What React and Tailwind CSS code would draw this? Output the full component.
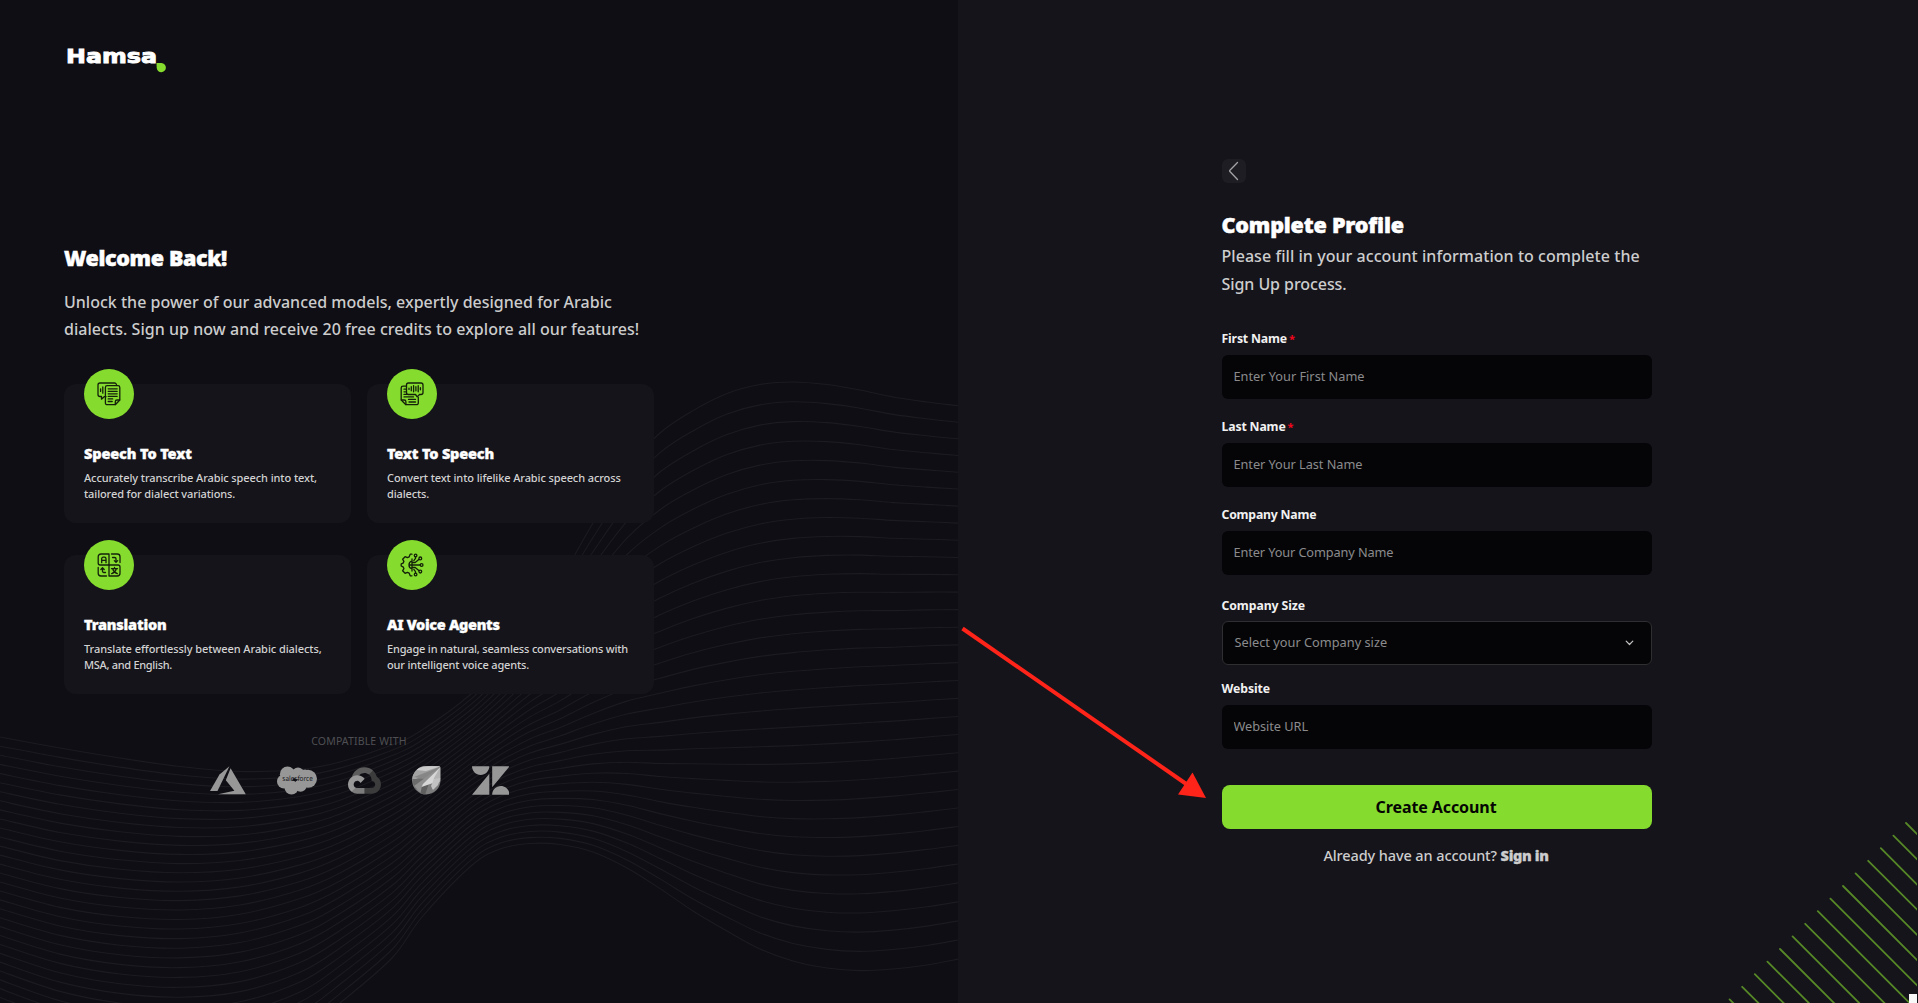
import React from "react";

/* ---------- background artwork ---------- */

const WAVE_X = [0, 60, 120, 180, 240, 300, 340, 392, 422, 471, 500, 530, 560, 593, 627, 660, 693, 727, 760, 793, 827, 860, 893, 927, 960];
const WAVE_TOP = [737, 748, 758, 766.5, 771.5, 769.5, 762, 745, 730, 694, 663, 622, 580, 523, 469, 433, 410.6, 393.5, 384.5, 382, 384.5, 390, 397, 402, 406];
const WAVE_MID = [882, 898, 907, 910, 905, 890, 873, 842, 819, 780, 761, 746, 736, 724, 714, 708, 702, 697, 693, 690, 687.5, 685.5, 684, 682, 680.4];
const WAVE_LOW = [1015, 1038, 1052, 1058, 1054, 1033, 1003, 958, 917, 866, 849, 843.5, 844.5, 852, 868, 888.6, 911, 931, 949, 961, 968, 970.6, 969, 965, 958.8];
const WAVE_COUNT = 32;

function wavePath(k) {
  const a = ((k - 16) * (k - 31)) / (16 * 31);
  const b = (k * (k - 31)) / (16 * -15);
  const c = (k * (k - 16)) / (31 * 15);
  const pts = WAVE_X.map((x, i) => [x, a * WAVE_TOP[i] + b * WAVE_MID[i] + c * WAVE_LOW[i]]);
  let d = `M${pts[0][0]} ${pts[0][1].toFixed(1)}`;
  for (let i = 0; i < pts.length - 1; i++) {
    const p0 = pts[i - 1] || pts[i];
    const p1 = pts[i];
    const p2 = pts[i + 1];
    const p3 = pts[i + 2] || p2;
    const c1 = [p1[0] + (p2[0] - p0[0]) / 6, p1[1] + (p2[1] - p0[1]) / 6];
    const c2 = [p2[0] - (p3[0] - p1[0]) / 6, p2[1] - (p3[1] - p1[1]) / 6];
    d += `C${c1[0].toFixed(1)} ${c1[1].toFixed(1)} ${c2[0].toFixed(1)} ${c2[1].toFixed(1)} ${p2[0]} ${p2[1].toFixed(1)}`;
  }
  return d;
}

function Waves() {
  return (
    <svg className="absolute inset-0" width="958" height="1003" viewBox="0 0 958 1003" fill="none" stroke="#1c1b21" strokeWidth="1.1" aria-hidden="true">
      {Array.from({ length: WAVE_COUNT }, (_, k) => (
        <path key={k} d={wavePath(k)} />
      ))}
    </svg>
  );
}

function CornerHatch() {
  return (
    <svg className="absolute right-px bottom-0" width="199" height="200" viewBox="0 0 199 200" fill="none" stroke="#568827" strokeWidth="1.8" strokeLinecap="round" aria-hidden="true">
      {Array.from({ length: 15 }, (_, i) => {
        const x = 188 - i * 12.6;
        const y = 20 + i * 12.6;
        return <path key={i} d={`M${x} ${y}l200 200`} />;
      })}
    </svg>
  );
}

function Arrow() {
  return (
    <svg className="absolute left-[950px] top-[610px]" width="280" height="200" viewBox="950 610 280 200" aria-hidden="true">
      <path d="M962.5 628.5L1187 784.5" stroke="#fe2419" strokeWidth="4" />
      <path d="M1206 798L1192.500 772.500L1178 794.500Z" fill="#fe2419" />
    </svg>
  );
}

/* ---------- brand marks ---------- */

function Logo() {
  return (
    <svg width="102" height="28" viewBox="0 0 102 28" role="img" aria-label="Hamsa">
      <text x="0" y="17.4" textLength="91" lengthAdjust="spacingAndGlyphs" fontSize="19.5" fontWeight="700" fill="#fff" stroke="#fff" strokeWidth="0.9" fontFamily="'DejaVu Sans', sans-serif">
        Hamsa
      </text>
      <path d="M90.5 17h5a4.6 4.6 0 1 1-4.8 4.8z" fill="#85dc2e" />
    </svg>
  );
}

function Azure() {
  return (
    <svg width="36" height="29" viewBox="0 0 36 29" fill="#979797" aria-hidden="true">
      <path d="M19.4.2L9.5 8.6L0 25h7.5z" />
      <path d="M20.6 2.2L15.8 14.3l8.6 10.4L8 28.3h27.8z" />
    </svg>
  );
}

function Salesforce() {
  return (
    <svg width="40" height="29" viewBox="0 0 40 29" aria-hidden="true">
      <g fill="#979797">
        <circle cx="10.5" cy="8.2" r="7.6" />
        <circle cx="21" cy="7.4" r="6" />
        <circle cx="31" cy="12.8" r="9" />
        <circle cx="7" cy="15.5" r="7" />
        <circle cx="14.5" cy="21.5" r="7" />
        <circle cx="23.5" cy="19.5" r="6.2" />
        <circle cx="28" cy="9" r="5.5" />
      </g>
      <text x="5.3" y="15.4" textLength="30.5" lengthAdjust="spacingAndGlyphs" fontSize="7.2" fill="#18171c" textRendering="geometricPrecision" fontFamily="'Noto Sans', sans-serif">
        salesforce
      </text>
    </svg>
  );
}

function GoogleCloud() {
  return (
    <svg width="33" height="27" viewBox="0 0 256 206" aria-hidden="true">
      <path fill="#5c5c5c" d="M170.25 56.82l22.25-22.25 1.48-9.37C153.44-11.68 88.98-7.5 52.42 33.92 42.27 45.42 34.73 59.76 30.72 74.57l7.97-1.12 44.5-7.34 3.44-3.51c19.8-21.74 53.27-24.67 76.13-6.17l7.49.39z" />
      <path fill="#3c3c3d" d="M224.2 73.92a100.25 100.25 0 0 0-30.21-48.72l-31.24 31.23a55.52 55.52 0 0 1 20.38 44.04v5.54c15.35 0 27.8 12.45 27.8 27.8s-12.45 27.57-27.8 27.57h-55.67l-5.47 5.94v33.34l5.47 5.23h55.67c39.93.31 72.55-31.5 72.86-71.42a72.3 72.3 0 0 0-31.79-60.55z" />
      <path fill="#7b7b7b" d="M71.87 205.8h55.59v-44.5H71.87a27.28 27.28 0 0 1-11.4-2.5l-7.89 2.42-22.41 22.25-1.95 7.58a71.48 71.48 0 0 0 43.65 14.75z" />
      <path fill="#989898" d="M71.87 61.43C31.94 61.66-.24 94.23 0 134.16a72.3 72.3 0 0 0 28.22 56.88l32.25-32.25c-13.99-6.32-20.21-22.78-13.89-36.77s22.79-20.21 36.78-13.89a27.8 27.8 0 0 1 13.88 13.89l32.25-32.25a72.22 72.22 0 0 0-57.62-28.34z" />
    </svg>
  );
}

function Leaf() {
  return (
    <svg width="29" height="29" viewBox="0 0 29 29" aria-hidden="true">
      <clipPath id="leaf-clip">
        <path d="M14.3 0H26.5a2 2 0 0 1 2 2v12.3A14.2 14.2 0 1 1 14.3 0z" />
      </clipPath>
      <g clipPath="url(#leaf-clip)">
        <path d="M0 0h29v29H0z" fill="#7c7c7c" />
        <path d="M0 0h29L16 7L0 15z" fill="#a2a2a2" />
        <path d="M4 4C9 0 16 0 28 .5L14 5z" fill="#cacaca" />
        <path d="M2 11L28 1L13 13z" fill="#868686" />
        <path d="M0 13L13 13L10 20L3 24z" fill="#6c6c6c" />
        <path d="M2 20L28 1L9 27z" fill="#8f8f8f" />
        <path d="M10 20L17 17L13 29H8z" fill="#5f5f5f" />
        <path d="M28.5 1L11 18L9.5 21L24 16z" fill="#d6d6d6" />
        <path d="M28.5 .5V15L20 23L22 12z" fill="#b4b4b4" />
        <path d="M22 13L19 20L21 24L26 19L28.5 12z" fill="#c2c2c2" />
      </g>
    </svg>
  );
}

function Zendesk() {
  return (
    <svg width="37.5" height="29" viewBox="0 2.8 24 18.4" fill="#979797" aria-hidden="true">
      <path d="M12.914 2.904V16.29L24 2.905H12.914zM0 2.906C0 5.966 2.483 8.45 5.543 8.45s5.542-2.484 5.543-5.544H0zm11.086 4.807L0 21.096h11.086V7.713zm7.37 7.84c-3.063 0-5.542 2.48-5.542 5.543H24c0-3.06-2.48-5.543-5.543-5.543z" />
    </svg>
  );
}

/* ---------- feature icons ---------- */

function IconBase({ children }) {
  return (
    <svg width="24" height="24" viewBox="0 0 24 24" fill="none" stroke="#14200a" strokeWidth="1.3" strokeLinecap="round" strokeLinejoin="round" aria-hidden="true">
      {children}
    </svg>
  );
}

function SpeechToTextIcon() {
  return (
    <IconBase>
      <path d="M19.5 3.200V3a2 2 0 0 0-2-2H3a2 2 0 0 0-2 2v9.500a2 2 0 0 0 2 2h1.500v2.700l2.700-2.500H9" />
      <path d="M3.600 6.800v2.600M5.800 5v6.200" />
      <path d="M10.200 3.600h10.800a1.800 1.800 0 0 1 1.800 1.800V18l-4.500 4.700h-8.100A1.800 1.800 0 0 1 8.400 20.900V5.400a1.800 1.800 0 0 1 1.800-1.800z" />
      <path d="M18.300 22.500V19.700A1.700 1.700 0 0 1 20 18h2.600" />
      <path d="M11.200 6.800h9M11.200 9.300h9M11.200 11.800h9M11.200 14.300h9M11.200 16.900h4.500M11.200 19.500h4" />
    </IconBase>
  );
}

function TextToSpeechIcon() {
  return (
    <IconBase>
      <path d="M8.500 1h12.500a2 2 0 0 1 2 2v7.500a2 2 0 0 1-2 2h-1.500l-2.300 2.400l-1.700-2.400H8.500a2 2 0 0 1-2-2V3a2 2 0 0 1 2-2z" />
      <path d="M9 6.100v1.300M11.300 4.700v4.100M13.600 3.700v6.100M15.900 4.700v4.100M18.200 3.700v6.100M20.400 5.700v2.100" />
      <path d="M6.300 4.200H3A1.800 1.800 0 0 0 1.200 6v12l4.700 4.700h10.600a1.800 1.800 0 0 0 1.800-1.800v-5.500" />
      <path d="M1.400 18h2.800a1.700 1.700 0 0 1 1.700 1.700v2.800" />
      <path d="M4 7.200h1.500M4 9.800h1.500M4 12.400h2.500M4 14.900h9.500M8.500 17.400h7M9 20h6.500" />
    </IconBase>
  );
}

function TranslationIcon() {
  return (
    <IconBase>
      <path d="M12 1H4a2.800 2.800 0 0 0-2.800 2.800V10A2 2 0 0 0 3.200 12H12z" />
      <path d="M12 12v11h8.200a2.800 2.800 0 0 0 2.800-2.800V14a2 2 0 0 0-2-2z" />
      <path d="M14.500 1h5.700A2.800 2.800 0 0 1 23 3.800V9.500M1.200 14.500v5.700A2.800 2.800 0 0 0 4 23h5.500" />
      <path d="M4.700 9.700V5.700a1.500 1.500 0 0 1 1.500-1.500h1.300A1.500 1.500 0 0 1 9 5.700v4M4.700 7.400H9" />
      <path d="M15.500 4.500h2.200a1.300 1.300 0 0 1 1.300 1.300v3.200M17.300 7.600L19 9.400l1.700-1.800" />
      <path d="M8.500 19.500H6.800a1.300 1.300 0 0 1-1.300-1.300V15M3.900 16.500l1.600-1.700l1.700 1.700" />
      <path d="M14.500 15.700h6M17.500 14.400v1.300M19.300 15.900c-.6 2.500-2.300 4-4.600 4.800M15.700 15.900c.6 2.500 2.300 4 4.600 4.800" />
    </IconBase>
  );
}

function VoiceAgentIcon() {
  return (
    <IconBase>
      <path d="M12 1.200h-1.800l-1 2.600l-1.800.9l-2.300-1L2.600 6.200l1.300 2.200l-.8 1.700l-1.900.9M1.200 13l1.900.9l.8 1.700l-1.300 2.200l2.500 2.500l2.300-1l1.800.9l1 2.600H12M1.200 11v2" />
      <path d="M12 8.200a3.900 3.900 0 0 0 0 7.600M12 6v12M9.500 12h10.700M12 9.500h3.200l3.600-3M12 14.500h3.200l3.600 3M13.800 7.600l1.700-2.200V3.800M13.800 16.400l1.700 2.200v1.600" />
      <circle cx="15.600" cy="2.500" r="1.300" />
      <circle cx="20.300" cy="5.400" r="1.400" />
      <circle cx="21.600" cy="12" r="1.400" />
      <circle cx="20.300" cy="18.600" r="1.400" />
      <circle cx="15.600" cy="21.500" r="1.300" />
    </IconBase>
  );
}

/* ---------- left panel ---------- */

function FeatureCard({ icon, title, titleClass, lines }) {
  return (
    <article className="relative h-[139px] rounded-xl bg-[#15141a] px-5 pt-[59px]">
      <div className="absolute -top-[15px] left-5 flex size-[50px] items-center justify-center rounded-full bg-[#85dc2e]">
        {icon}
      </div>
      <h3 className={`text-[14.5px] leading-5 font-black whitespace-nowrap text-white [-webkit-text-stroke:0.35px_white] ${titleClass}`}>{title}</h3>
      <p className="mt-[7px] text-[11px] leading-4 font-medium whitespace-nowrap text-[#d2d2d3]">
        {lines.map(([text, tracking]) => (
          <span key={text} className={`block ${tracking}`}>
            {text}
          </span>
        ))}
      </p>
    </article>
  );
}

function LeftPanel() {
  return (
    <section className="relative h-full w-[958px] shrink-0 overflow-hidden bg-[#0f0e14]">
      <Waves />
      <div className="relative flex h-full w-[654px] flex-col pl-16">
        <header className="h-[242px] pt-[46px] pl-[1.5px]">
          <Logo />
        </header>
        <h1 className="text-[21.5px] leading-8 font-black tracking-[-0.36px] text-white [-webkit-text-stroke:0.5px_white]">Welcome Back!</h1>
        <p className="mt-[15px] text-base leading-[27px] font-medium whitespace-nowrap text-[#cccccd]">
          <span className="block tracking-[0.01px]">Unlock the power of our advanced models, expertly designed for Arabic</span>
          <span className="block tracking-[0.04px]">dialects. Sign up now and receive 20 free credits to explore all our features!</span>
        </p>
        <div className="mt-[41px] grid grid-cols-2 gap-x-4 gap-y-8">
          <FeatureCard
            icon={<SpeechToTextIcon />}
            title="Speech To Text"
            titleClass="tracking-[-0.13px]"
            lines={[
              ["Accurately transcribe Arabic speech into text,", "tracking-[-0.09px]"],
              ["tailored for dialect variations.", "tracking-[-0.11px]"],
            ]}
          />
          <FeatureCard
            icon={<TextToSpeechIcon />}
            title="Text To Speech"
            titleClass="tracking-[-0.18px]"
            lines={[
              ["Convert text into lifelike Arabic speech across", "tracking-[-0.1px]"],
              ["dialects.", "tracking-[-0.13px]"],
            ]}
          />
          <FeatureCard
            icon={<TranslationIcon />}
            title="Translation"
            titleClass="tracking-[-0.2px]"
            lines={[
              ["Translate effortlessly between Arabic dialects,", "tracking-[-0.06px]"],
              ["MSA, and English.", "tracking-[-0.3px]"],
            ]}
          />
          <FeatureCard
            icon={<VoiceAgentIcon />}
            title="AI Voice Agents"
            titleClass="tracking-[-0.34px]"
            lines={[
              ["Engage in natural, seamless conversations with", "tracking-[-0.18px]"],
              ["our intelligent voice agents.", "tracking-[-0.15px]"],
            ]}
          />
        </div>
        <p className="mt-[39px] text-center text-[10.5px] leading-4 tracking-[0.15px] text-[#4e4e53]">COMPATIBLE WITH</p>
        <div className="mt-[17px] flex items-center justify-center gap-[31px] pl-px">
          <Azure />
          <Salesforce />
          <GoogleCloud />
          <Leaf />
          <Zendesk />
        </div>
      </div>
    </section>
  );
}

/* ---------- right panel ---------- */

function Label({ children, required, className }) {
  return (
    <label className={`-ml-[0.5px] block text-[12.25px] leading-5 font-bold text-[#f1f1f1] ${className}`}>
      {children}
      {required && <span className="ml-[2px] text-[11px] text-[#f5051c]">*</span>}
    </label>
  );
}

function Field({ placeholder, className }) {
  return (
    <input
      type="text"
      placeholder={placeholder}
      className={`mt-[6px] block h-11 w-full rounded-md bg-[#050507] px-[11.5px] pb-[2px] text-[12.75px] outline-none placeholder:text-[#8b8b8d] ${className}`}
    />
  );
}

function RightPanel() {
  return (
    <section className="relative h-full grow overflow-hidden bg-[#15141a]">
      <CornerHatch />
      <div className="absolute right-px bottom-0 h-[9px] w-2 bg-[#f8f8f8]" />
      <form className="relative ml-[264px] w-[430px] pt-[159px]">
        <button type="button" aria-label="Back" className="flex size-6 items-center justify-center rounded-md bg-[#1e1d23]">
          <svg width="24" height="24" viewBox="0 0 24 24" fill="none" stroke="#a3a3a5" strokeWidth="1.3" strokeLinecap="round" strokeLinejoin="round" aria-hidden="true">
            <path d="M15.500 3.500L7.900 11.300a.8.800 0 0 0 0 1.200L15.500 20.500" />
          </svg>
        </button>
        <h2 className="mt-[27px] -ml-[0.5px] h-[30px] text-[21.5px] leading-[30px] font-black tracking-[-0.17px] text-white [-webkit-text-stroke:0.5px_white]">Complete Profile</h2>
        <p className="mt-[2px] -ml-[0.5px] text-base leading-7 font-medium whitespace-nowrap text-[#cdcdce]">
          <span className="block tracking-[0.05px]">Please fill in your account information to complete the</span>
          <span className="block tracking-[-0.07px]">Sign Up process.</span>
        </p>

        <Label required className="mt-[31px] tracking-[-0.16px]">First Name</Label>
        <Field placeholder="Enter Your First Name" className="tracking-[-0.01px]" />
        <Label required className="mt-[18px] tracking-[-0.15px]">Last Name</Label>
        <Field placeholder="Enter Your Last Name" className="tracking-[-0.05px]" />
        <Label className="mt-[18px] tracking-[-0.2px]">Company Name</Label>
        <Field placeholder="Enter Your Company Name" className="tracking-[-0.11px]" />

        <Label className="mt-[21px] tracking-[-0.08px]">Company Size</Label>
        <button type="button" className="mt-[5px] flex h-11 w-full items-center justify-between rounded-md border border-[#2f2f32] bg-[#050507] pr-[17px] pl-[11.5px] text-[12.75px] tracking-[0.01px] text-[#8b8b8d]">
          <span className="pb-px">Select your Company size</span>
          <svg width="9" height="6" viewBox="0 0 9 6" fill="none" stroke="#c4c4c5" strokeWidth="1.2" strokeLinecap="round" strokeLinejoin="round" aria-hidden="true">
            <path d="M1.200 1.200L4.500 4.500L7.800 1.200" />
          </svg>
        </button>

        <Label className="mt-[14px] tracking-[-0.08px]">Website</Label>
        <Field placeholder="Website URL" className="tracking-[-0.05px]" />

        <button type="submit" className="mt-9 flex h-11 w-full items-center justify-center rounded-lg bg-[#85dc2e] pr-[2px] text-base font-bold tracking-[-0.09px] text-[#050604]">
          Create Account
        </button>
        <p className="mt-[14px] pr-[2px] text-center text-[14.5px] leading-6 font-medium tracking-[-0.11px] text-[#cdcdce]">
          Already have an account? <a className="font-black tracking-[-0.33px] [-webkit-text-stroke:0.3px_#cdcdce]">Sign in</a>
        </p>
      </form>
    </section>
  );
}

export default function App() {
  return (
    <main className="relative flex h-[1003px] w-[1918px] overflow-hidden bg-[#0f0e14] font-['Noto_Sans',sans-serif]">
      <LeftPanel />
      <RightPanel />
      <Arrow />
    </main>
  );
}
